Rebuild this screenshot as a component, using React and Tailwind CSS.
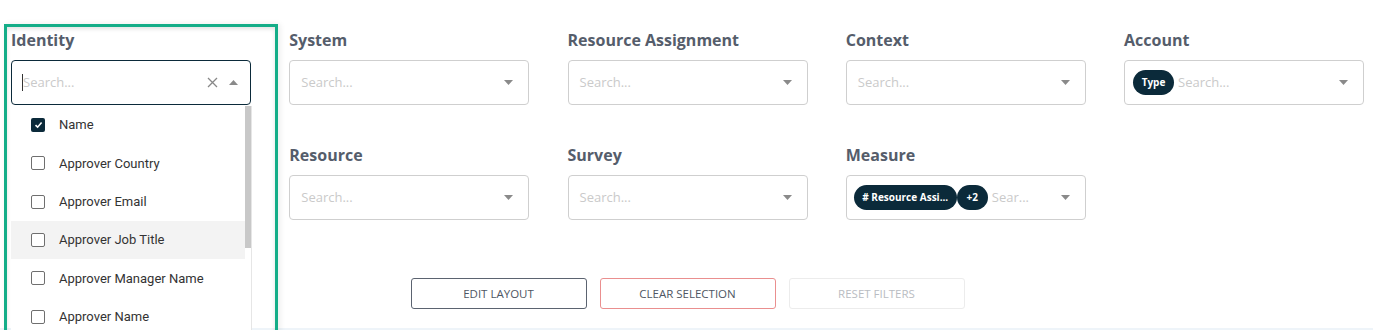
import React from "react";

const labelCls =
  "h-[24px] mb-[8px] text-[16px] leading-[24px] font-bold text-[#555d6b] font-['Open_Sans',sans-serif]";

function Caret() {
  return (
    <svg width="9" height="5" viewBox="0 0 9 5" className="shrink-0">
      <path d="M0 0 L9 0 L4.5 5 Z" fill="#8a8a8a" />
    </svg>
  );
}

function Chip({ children, className = "" }) {
  return (
    <span
      className={
        "inline-flex items-center justify-center h-[25px] rounded-full bg-[#0b2a3a] text-white text-[10px] font-bold font-['Open_Sans',sans-serif] whitespace-nowrap " +
        className
      }
    >
      {children}
    </span>
  );
}

function Field({ label, chips }) {
  return (
    <div className="w-[240px]">
      <div className={labelCls}>{label}</div>
      <div className="h-[45px] border border-[#cfcfcf] rounded-[4px] flex items-center pl-[7px] pr-[15px] bg-white">
        <div className="flex items-center flex-1 min-w-0">
          {chips}
          <span className="ml-[4px] text-[13px] text-[#cacaca] font-['Open_Sans',sans-serif]">
            {label === "Measure" ? "Sear..." : "Search..."}
          </span>
        </div>
        <Caret />
      </div>
    </div>
  );
}

function Check({ checked }) {
  return checked ? (
    <span className="w-[14px] h-[14px] rounded-[2px] bg-[#0b2a3a] flex items-center justify-center">
      <svg width="9" height="8" viewBox="0 0 9 8">
        <path d="M1.5 4.2 L3.6 6.2 L7.6 1.5" stroke="white" strokeWidth="1.6" fill="none" />
      </svg>
    </span>
  ) : (
    <span className="w-[14px] h-[14px] rounded-[2px] border border-[#6f6f6f] bg-white" />
  );
}

const items = [
  ["Name", true],
  ["Approver Country", false],
  ["Approver Email", false],
  ["Approver Job Title", false],
  ["Approver Manager Name", false],
  ["Approver Name", false],
];

function IdentityField() {
  return (
    <div className="w-[240px] relative">
      <div className="absolute left-[-7px] top-[-4px] w-[274px] h-[320px] border-[3px] border-[#14ad88] shadow-[inset_0_2px_4px_rgba(0,0,0,0.12),2px_0_6px_rgba(0,0,0,0.08)] pointer-events-none z-20" />
      <div className={labelCls}>Identity</div>
      <div className="h-[45px] border border-[#0b2a3a] rounded-[4px] flex items-center pl-[10px] pr-[12px] bg-white">
        <span className="w-px h-[17px] bg-[#333]" />
        <span className="text-[13px] text-[#cacaca] font-['Open_Sans',sans-serif] flex-1">
          Search...
        </span>
        <svg width="11" height="11" viewBox="0 0 11 11" className="mr-[11px]">
          <path d="M1 1 L10 10 M10 1 L1 10" stroke="#888" strokeWidth="1.3" />
        </svg>
        <svg width="9" height="5" viewBox="0 0 9 5">
          <path d="M0 5 L9 5 L4.5 0 Z" fill="#8a8a8a" />
        </svg>
      </div>
      <div className="absolute left-0 top-[78px] w-[241px] h-[260px] bg-white border-r border-[#e6e6e6] z-10 flex">
        <div className="flex-1">
          {items.map(([t, c]) => (
            <div
              key={t}
              className={
                "h-[38.3px] flex items-center pl-[20px] gap-[14px] " +
                (t === "Approver Job Title" ? "bg-[#f3f3f3]" : "")
              }
            >
              <Check checked={c} />
              <span className="text-[13px] text-[#333] font-['Roboto',sans-serif]">{t}</span>
            </div>
          ))}
        </div>
        <div className="w-[6px] h-full">
          <div className="w-[6px] h-[142px] bg-[#c8c8c8]" />
        </div>
      </div>
    </div>
  );
}

export default function App() {
  return (
    <div className="w-[1373px] h-[330px] bg-white relative overflow-hidden">
      <div className="pt-[28px] pl-[11px]">
        <div className="grid grid-cols-[240px_240px_240px_240px_240px] gap-x-[38.25px] gap-y-[38px]">
          <IdentityField />
          <Field label="System" />
          <Field label="Resource Assignment" />
          <Field label="Context" />
          <Field
            label="Account"
            chips={<Chip className="w-[41px] ml-[1px]">Type</Chip>}
          />
          <div />
          <Field label="Resource" />
          <Field label="Survey" />
          <Field
            label="Measure"
            chips={
              <>
                <Chip className="w-[103px]">#&nbsp;Resource Assi...</Chip>
                <Chip className="w-[31px]">+2</Chip>
              </>
            }
          />
          <div />
        </div>
        <div className="flex justify-center gap-[13px] mt-[58px] pr-[9px]">
          <button className="w-[176px] h-[31px] border border-[#5b6370] rounded-[3px] text-[11.5px] text-[#4e5663] font-['Open_Sans',sans-serif] bg-white">
            EDIT LAYOUT
          </button>
          <button className="w-[176px] h-[31px] border border-[#ea8f8f] rounded-[3px] text-[11.5px] text-[#4e5663] font-['Open_Sans',sans-serif] bg-white">
            CLEAR SELECTION
          </button>
          <button className="w-[176px] h-[31px] border border-[#ececec] rounded-[3px] text-[11.5px] text-[#b9bcc2] font-['Open_Sans',sans-serif] bg-white">
            RESET FILTERS
          </button>
        </div>
      </div>
      <div className="absolute left-0 right-0 bottom-0 h-[2px] bg-[#eef4f9]" />
    </div>
  );
}
